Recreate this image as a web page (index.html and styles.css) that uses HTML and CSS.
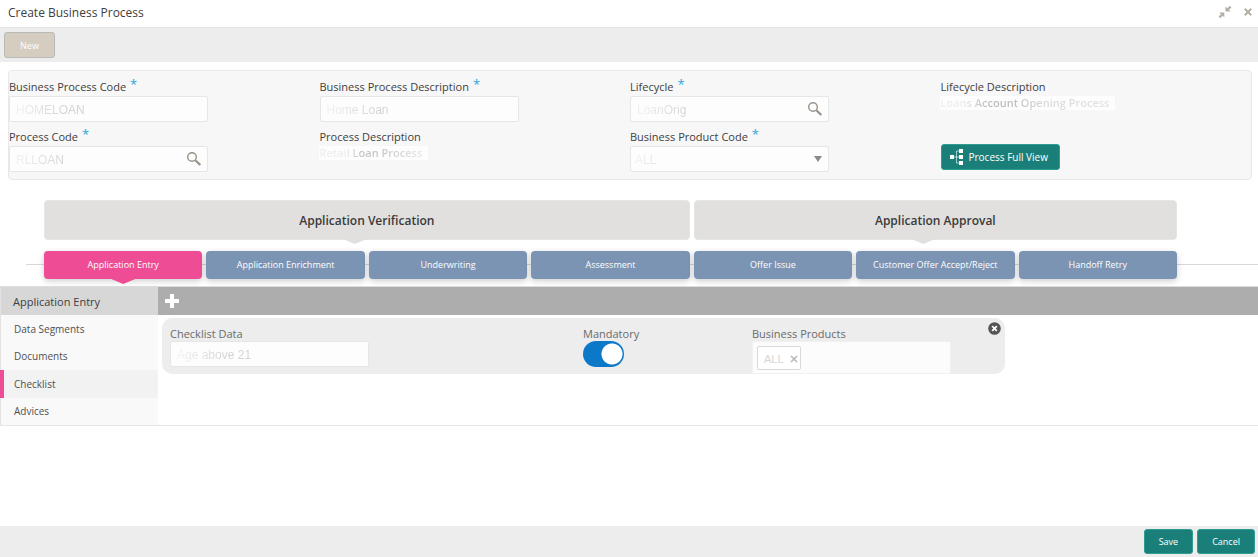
FILE: index.html
```html
<!DOCTYPE html>
<html lang="en">
<head>
<meta charset="utf-8">
<title>Create Business Process</title>
<link rel="stylesheet" href="styles.css">
</head>
<body>
<div class="page">
  <header class="titlebar">
    <h1 class="title">Create Business Process</h1>
    <div class="window-actions">
      <button class="icon-btn" type="button" aria-label="Collapse">
        <svg width="14" height="14" viewBox="0 0 14 14" fill="#b5b0a6"><path d="M7.500 1.500v5h5L10.900 5 13.400 2.300 11.900.8 9.200 3.300zM6.300 12.500v-5h-5L3 9.200.6 11.600l1.600 1.600 2.500-2.500z"/></svg>
      </button>
      <button class="icon-btn" type="button" aria-label="Close">
        <svg width="8" height="8" viewBox="0 0 8 8" stroke="#b5b0a6" stroke-width="2"><path d="M.8.8l6.400 6.400M7.200.8L.8 7.200"/></svg>
      </button>
    </div>
  </header>

  <div class="toolbar"><button class="new-btn" type="button" disabled>New</button></div>

  <form class="form-panel">
    <div class="field">
      <label class="label" for="bp-code">Business Process Code<span class="req">*</span></label>
      <div class="control"><input class="input" id="bp-code" value="HOMELOAN"></div>
    </div>
    <div class="field">
      <label class="label" for="bp-desc">Business Process Description<span class="req">*</span></label>
      <div class="control"><input class="input" id="bp-desc" value="Home Loan"></div>
    </div>
    <div class="field">
      <label class="label" for="lifecycle">Lifecycle<span class="req">*</span></label>
      <div class="control"><input class="input" id="lifecycle" value="LoanOrig">
        <button class="search-btn" type="button" aria-label="Search lifecycle"><svg width="16" height="16" viewBox="0 0 16 16" fill="none" stroke="#98928a"><circle cx="6" cy="6" r="4.300" stroke-width="1.400"/><path d="M9.300 9.300l5 4.700" stroke-width="2.200"/></svg></button>
      </div>
    </div>
    <div class="field">
      <span class="label">Lifecycle Description</span>
      <div class="readout"><span class="fade fade-wide">Loans Account Opening Process</span></div>
    </div>
    <div class="field">
      <label class="label" for="p-code">Process Code<span class="req">*</span></label>
      <div class="control"><input class="input" id="p-code" value="RLLOAN">
        <button class="search-btn" type="button" aria-label="Search process code"><svg width="16" height="16" viewBox="0 0 16 16" fill="none" stroke="#98928a"><circle cx="6" cy="6" r="4.300" stroke-width="1.400"/><path d="M9.300 9.300l5 4.700" stroke-width="2.200"/></svg></button>
      </div>
    </div>
    <div class="field">
      <span class="label">Process Description</span>
      <div class="readout"><span class="fade">Retail Loan Process</span></div>
    </div>
    <div class="field">
      <label class="label" for="product">Business Product Code<span class="req">*</span></label>
      <div class="control"><select class="input select" id="product"><option>ALL</option></select>
        <svg class="caret" width="8" height="6" viewBox="0 0 8 6" fill="#8b8b8b"><path d="M0 0h8L4 6z"/></svg>
      </div>
    </div>
    <div class="field field-action">
      <button class="btn view-btn" type="button">
        <svg width="13" height="16" viewBox="0 0 13 16" fill="#fff"><path d="M0 6h4v4H0zM9 0h4v4H9zM9 6h4v4H9zM9 12h4v4H9z"/><path d="M4 8h5M9 2H6.500v12H9" fill="none" stroke="#fff" stroke-opacity=".6"/></svg>
        Process Full View
      </button>
    </div>
  </form>

  <section class="flow">
    <div class="stage stage-verify">Application Verification</div>
    <div class="stage stage-approve">Application Approval</div>
    <div class="steps">
      <button class="step step-active" type="button">Application Entry</button>
      <button class="step" type="button">Application Enrichment</button>
      <button class="step" type="button">Underwriting</button>
      <button class="step" type="button">Assessment</button>
      <button class="step" type="button">Offer Issue</button>
      <button class="step" type="button">Customer Offer Accept/Reject</button>
      <button class="step" type="button">Handoff Retry</button>
    </div>
  </section>

  <section class="detail">
    <nav class="side">
      <h2 class="side-title">Application Entry</h2>
      <a class="side-link" href="#segments">Data Segments</a>
      <a class="side-link" href="#documents">Documents</a>
      <a class="side-link side-current" href="#checklist">Checklist</a>
      <a class="side-link" href="#advices">Advices</a>
    </nav>
    <div class="content">
      <div class="content-bar">
        <button class="icon-btn" type="button" aria-label="Add checklist">
          <svg width="14" height="14" viewBox="0 0 14 14" fill="#fff"><path d="M5 0h4v5h5v4H9v5H5V9H0V5h5z"/></svg>
        </button>
      </div>
      <div class="card">
        <div class="card-field">
          <label class="card-label" for="check-data">Checklist Data</label>
          <div class="control"><input class="input" id="check-data" value="Age above 21"></div>
        </div>
        <div class="card-field">
          <label class="card-label" for="mandatory">Mandatory</label>
          <input class="toggle" type="checkbox" role="switch" id="mandatory" checked>
        </div>
        <div class="card-field">
          <span class="card-label">Business Products</span>
          <div class="chips"><span class="chip">ALL
            <button class="icon-btn" type="button" aria-label="Remove ALL"><svg width="8" height="8" viewBox="0 0 8 8" stroke="#b4b8b6" stroke-width="1.600"><path d="M1 1l6 6M7 1L1 7"/></svg></button></span></div>
        </div>
        <button class="icon-btn card-close" type="button" aria-label="Delete checklist">
          <svg width="13" height="13" viewBox="0 0 13 13"><circle cx="6.500" cy="6.500" r="6.300" fill="#555"/><path d="M4.200 4.200l4.600 4.600M8.800 4.200L4.200 8.800" stroke="#fff" stroke-width="1.800"/></svg>
        </button>
      </div>
    </div>
  </section>

  <footer class="footer">
    <button class="btn" type="button">Save</button>
    <button class="btn" type="button">Cancel</button>
  </footer>
</div>
</body>
</html>
```
FILE: styles.css
```css
* { box-sizing: border-box; }
body { margin: 0; background: #fff; color: #404040; font: 12px/16px "Open Sans", "Noto Sans", sans-serif; }
button, input, select { font: inherit; margin: 0; }
button { border: 0; cursor: pointer; }
h1, h2 { margin: 0; font-weight: 400; }
.page { min-height: 100vh; display: flex; flex-direction: column; }

.titlebar { height: 28px; padding: 0 6px 4px 8px; display: flex; align-items: center; justify-content: space-between; border-bottom: 1px solid #e4e4e4; }
.title { font-size: 12px; line-height: 16px; padding-top: 2px; }
.window-actions { display: flex; align-items: center; gap: 12px; }
.icon-btn { padding: 0; background: none; display: flex; }

.toolbar { height: 34px; padding: 4px; background: #ededed; }
.new-btn { width: 51px; height: 26px; padding-top: 3px; border: 1px solid #b9bab8; border-radius: 3px; background: #d5cdc0; color: #fff; font-size: 9px; }

.form-panel { margin: 8px 6px 0 8px; height: 110px; border: 1px solid #e8e8e8; border-radius: 4px; background: #f7f7f7; display: grid; grid-template-columns: repeat(4, 1fr); grid-template-rows: 50px 50px; padding-top: 8px; }
.label { display: block; height: 17px; line-height: 16px; font-size: 11px; white-space: nowrap; }
.req { margin-left: 4px; color: #2ba6dc; font-size: 13px; line-height: 8px; vertical-align: 2px; }
.control { position: relative; width: 199px; }
.input { display: block; width: 100%; height: 26px; padding: 2px 6px 0; border: 1px solid #e6e6e6; border-radius: 2px; background: linear-gradient(90deg, #f0f0f0 10px, #d2d2d2 56px) text, #fdfdfd border-box; color: transparent; font: 12px "Liberation Sans", Arial, sans-serif; }
.select { appearance: none; padding-left: 4px; }
.search-btn { position: absolute; right: 0; top: 1px; width: 28px; height: 24px; padding: 4px 6px; background: none; }
.search-btn svg { display: block; }
.caret { position: absolute; right: 7px; top: 10px; pointer-events: none; }
.readout { display: table; margin-left: -1px; padding: 0 6px 0 1px; height: 14px; line-height: 14px; background: #fdfdfd; white-space: nowrap; }
.fade { font-size: 11px; font-weight: 600; color: transparent; background: linear-gradient(90deg, #eee 0 25%, #c2c2c2 40%, #c6c6c6 60%, #e6e6e6); background-clip: text; -webkit-background-clip: text; }
.fade-wide { background-image: linear-gradient(90deg, #eee 0 12%, #b8b8b8 30%, #bdbdbd 42%, #d8d8d8 60%, #e2e2e2); }
.field-action { display: flex; align-items: flex-start; padding-top: 15px; }
.btn { height: 25px; padding: 0 14px; border: 1px solid #2f9c90; border-radius: 3px; background: #1b7f79; color: #fff; font-size: 9px; font-weight: 500; line-height: 14px; }
.view-btn { height: 26px; width: 119px; padding: 0 8px; font-size: 10px; display: flex; align-items: center; gap: 6px; white-space: nowrap; }

.flow { display: grid; grid-template-columns: repeat(7, 1fr); column-gap: 4px; row-gap: 11px; padding: 20px 81px 7px 44px; }
.stage { position: relative; height: 40px; border: 1px solid #e6e6e4; border-radius: 4px; background: #e1e0de; color: #3a3a3a; font-weight: 600; line-height: 40px; text-align: center; }
.stage-verify { grid-column: span 4; }
.stage-approve { grid-column: span 3; }
.stage::after, .step-active::after { content: ""; position: absolute; top: 100%; left: 50%; width: 24px; height: 5px; margin-left: -12px; background: inherit; clip-path: polygon(0 0, 100% 0, 50% 100%); }
.stage::after { margin-left: -24px; }
.steps { grid-column: 1 / -1; position: relative; display: grid; grid-template-columns: repeat(7, 1fr); gap: 4px; }
.steps::before { content: ""; position: absolute; top: 13px; left: -18px; right: -81px; height: 1px; background: #d8d8d8; }
.step { position: relative; height: 28px; padding: 0; border-radius: 4px; background: #7b94b4; color: #fff; font-size: 9px; font-weight: 500; line-height: 14px; box-shadow: 0 2px 6px rgba(0, 0, 0, .2); white-space: nowrap; }
.step-active { background: #ee4d95; }

.detail { display: grid; grid-template-columns: 158px 1fr; border-top: 1px solid #ddd; border-bottom: 1px solid #e6e6e6; }
.side { display: flex; flex-direction: column; border-left: 1px solid #e2e2e2; background: #f9f9f9; }
.side-title { height: 28px; padding-left: 12px; background: #d7d7d7; font-size: 11px; line-height: 29px; }
.side-link { flex: 1; display: flex; align-items: center; padding-left: 13px; color: #505050; font-size: 10px; text-decoration: none; }
.side-current { margin-left: -1px; padding-left: 10px; border-left: 4px solid #ee4d95; background: #f2f2f2; }
.content { min-height: 138px; }
.content-bar { height: 28px; padding-left: 7px; background: #adadad; display: flex; align-items: center; }
.card { position: relative; width: 77%; max-width: 843px; height: 56px; margin: 3px 0 0 4px; padding: 8px 0 0 8px; border-radius: 10px; background: #ededed; display: grid; grid-template-columns: 413fr 169fr 253fr; }
.card-label { display: block; height: 15px; line-height: 16px; font-size: 11px; color: #6b6b6b; }
.toggle { appearance: none; display: block; width: 41px; height: 26px; border-radius: 13px; background: radial-gradient(circle at 29px 13px, #fff 10px, #0b79c8 11px); }
.chips { width: 199px; height: 33px; padding: 4px; border: 1px solid #f1f1f1; background: #fcfcfc; }
.chip { display: inline-flex; align-items: center; gap: 6px; height: 24px; width: 44px; padding: 2px 0 0 6px; border: 1px solid #d8d8d8; border-radius: 2px; background: #fff; color: #d6d6d6; font: 11px "Liberation Sans", Arial, sans-serif; }
.card-close { position: absolute; right: 4px; top: 4px; }

.footer { height: 31px; margin-top: auto; padding: 3px 3px 0; background: #ededed; display: flex; justify-content: flex-end; gap: 4px; }
```
